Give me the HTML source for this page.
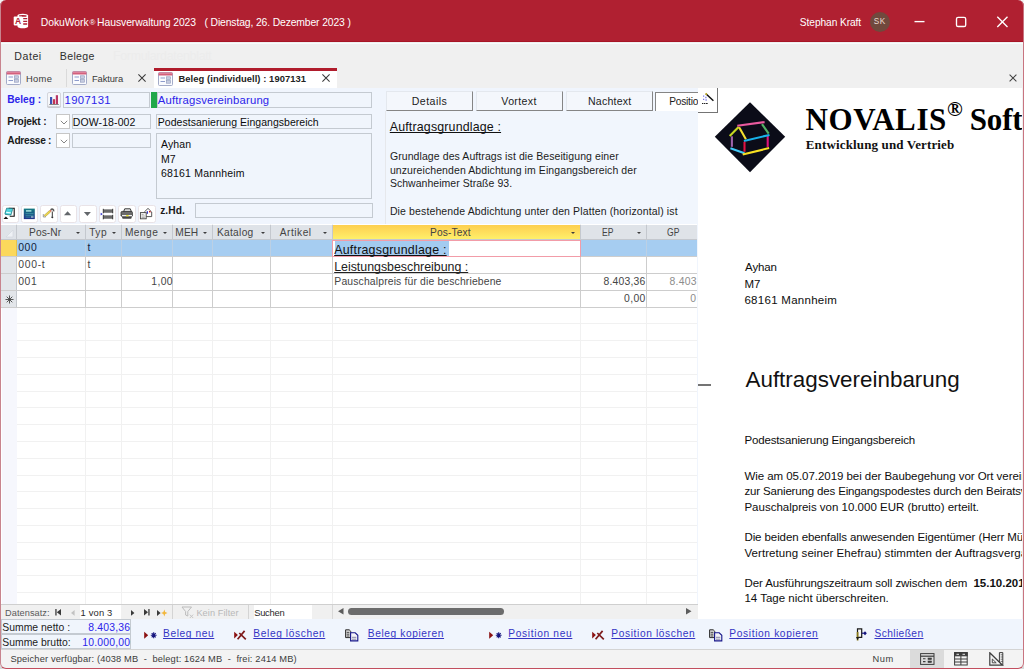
<!DOCTYPE html>
<html lang="de">
<head>
<meta charset="utf-8">
<title>DokuWork Hausverwaltung 2023</title>
<style>
*{box-sizing:border-box;margin:0;padding:0}
html,body{width:1024px;height:669px;overflow:hidden;background:#f2f5f5}
.cn{position:absolute;top:659px;width:10px;height:10px;background:#d6dada}
body{font-family:"Liberation Sans",sans-serif;font-size:11px;color:#222;position:relative}
.abs,.t,.bx{position:absolute}
.t{white-space:pre;line-height:1;color:#1c1c1c;text-decoration-skip-ink:none}
#win{position:absolute;left:0;top:0;width:1024px;height:669px;border-radius:6px;overflow:hidden;background:#f0f0f0}
#frame{position:absolute;left:0;top:0;width:1024px;height:669px;border-radius:6px;border:1.200px solid #c87480;border-left:1px solid #c8848e;border-top:none;border-bottom-color:#c24e5e;z-index:50}
#title{position:absolute;left:0;top:0;width:1024px;height:42.300px;background:#b02031;border-bottom:1.300px solid #a71526}
#title .t{color:#fff}
#avatar{position:absolute;left:869.500px;top:11.500px;width:20px;height:20px;border-radius:50%;background:#70493d}
#menu{position:absolute;left:0;top:42.800px;width:1024px;height:26px;background:#f0f0f0;border-top:1.500px solid #f7fcfc}
#tabs{position:absolute;left:0;top:68px;width:1024px;height:20px;background:#f0f0f0}
#acttab{position:absolute;left:153.500px;top:68px;width:183.500px;height:20px;background:#fff;border-top:3px solid #b01c2c}
#formbg{position:absolute;left:1px;top:88px;width:697.400px;height:137px;background:#f0f5fd}
.tb{position:absolute;border:1px solid #c4cad1;background:#f0f5fc}
.cbtn{position:absolute;border:1px solid #c6c6c6;background:#fff}
.ibtn{position:absolute;border:1px solid #d4d6dc;border-radius:2px;background:#f6f7fa;box-shadow:0 1px 0 #c8c8cc}
.tbtn{position:absolute;top:205.200px;width:17.600px;height:18.300px;border:1px solid #e9e3e7;border-radius:2.500px;background:#fff}
.itab{position:absolute;top:91.500px;height:19px;background:#f4f7fc;border-right:1.500px solid #858585;border-bottom:1.500px solid #858585;border-top:1px solid #e4e8ee;border-left:1px solid #e4e8ee}
.itab.sel{background:#fff;border:none;border-left:1.500px solid #858585;border-top:1.500px solid #858585;height:20px}
#ipage{position:absolute;left:385px;top:111px;width:313.400px;height:114px;background:#f1f6fd;overflow:hidden;border-left:1px solid #e6e8ec}
#grid{position:absolute;left:1px;top:224px;width:695.500px;height:381px;background:#fff;overflow:hidden}
.vl,.hl{position:absolute;background:#f1f1f1}
.vl{top:0;width:1px;height:381px}
.hl{left:0;height:1px;width:696px}
#ghead{position:absolute;left:0;top:.8px;width:696px;height:15px;background:#dfe3e8;border-bottom:1px solid #c4c8ce}
.hs{position:absolute;top:0;width:1px;height:15px;background:#c4c8ce}
.ar{position:absolute;top:7.400px;width:0;height:0;border:2.200px solid transparent;border-top:2.600px solid #3c3c3c;border-bottom:none}
.row{position:absolute;left:0;width:696px;background:#fff;border-bottom:1px solid #cdcdcd}
.cs{position:absolute;top:0;width:1px;height:100%;background:#cdcdcd}
.rs{position:absolute;left:0;top:0;width:15.500px;height:100%;background:#e3e6ea;border-right:1px solid #c4c8ce}
#grid .t{color:#454545}
#prev{position:absolute;left:698.400px;top:88px;width:324px;height:532px;background:#fff;overflow:hidden}
#prev .t{color:#0e0e0e}
#nav{position:absolute;left:1px;top:604px;width:697px;height:15px;background:#f0f0f0;border-top:1px solid #cfcfcf}
#sum{position:absolute;left:1px;top:619px;width:1022px;height:30px;background:#f0f5fd}
.lk{color:#3434c4 !important;text-decoration:underline;text-decoration-thickness:1px;text-underline-offset:1px}
#status{position:absolute;left:0;top:648.500px;width:1024px;height:21px;background:#f3f3f3;border-top:1px solid #d4d4d4}
</style>
</head>
<body>
<div class="cn" style="left:0"></div><div class="cn" style="left:1014px"></div>
<div id="win">
<!-- TITLE BAR -->
<div id="title">
<svg class="abs" style="left:13px;top:13px" width="16" height="16" viewBox="0 0 16 16">
<path d="M4.500 2.600C4.500 1.500 7 .8 9.800 .8s5.300.7 5.300 1.800v10.800c0 1.100-2.500 1.800-5.300 1.800s-5.300-.7-5.300-1.800z" fill="#fff"/>
<ellipse cx="9.800" cy="2.900" rx="3.900" ry=".9" fill="#b02031"/>
<path d="M10.200 5.600h4M10.200 8.300h4M10.200 11h4" stroke="#b02031" stroke-width="1.300"/>
<rect x=".7" y="3.600" width="8.600" height="8.800" rx=".8" fill="#fff"/>
<text x="5" y="11" font-family="Liberation Sans,sans-serif" font-weight="bold" font-size="8.500" fill="#b02031" text-anchor="middle">A</text>
</svg>
<span class="t" style="left:40.82px;top:17.80px;font-size:10.4px;letter-spacing:-0.065px">DokuWork</span>
<span class="t" style="left:89.40px;top:18.63px;font-size:8px;letter-spacing:0.000px">®</span>
<span class="t" style="left:97.12px;top:17.80px;font-size:10.4px;letter-spacing:-0.086px">Hausverwaltung 2023</span>
<span class="t" style="left:204.52px;top:17.80px;font-size:10.4px;letter-spacing:-0.146px">( Dienstag, 26. Dezember 2023 )</span>
<span class="t" style="left:799.84px;top:17.77px;font-size:10.2px;letter-spacing:-0.081px">Stephan Kraft</span>
<div id="avatar"></div>
<span class="t" style="left:873.77px;top:17.66px;font-size:8.2px;letter-spacing:0.644px;color:#ecd9d2">SK</span>
<svg class="abs" style="left:910px;top:12px" width="110" height="20" viewBox="0 0 110 20" fill="none" stroke="#fff" stroke-width="1.350">
<path d="M4.500 9.600h10"/><rect x="46.500" y="5.300" width="9.200" height="9.200" rx="1.600"/><path d="M87.300 4.800l10.200 10.200M97.500 4.800l-10.200 10.200"/></svg>
</div>
<!-- MENU -->
<div id="menu"></div>
<span class="t" style="left:14.31px;top:50.53px;font-size:10.6px;letter-spacing:0.537px;color:#2e2e2e">Datei</span>
<span class="t" style="left:59.81px;top:50.53px;font-size:10.6px;letter-spacing:0.328px;color:#2e2e2e">Belege</span>
<span class="t" style="left:112.99px;top:49.50px;font-size:12.4px;letter-spacing:-0.305px;color:#ececec">Formulardatenblatt</span>
<!-- DOCUMENT TABS -->
<div id="tabs"></div>
<div id="acttab"></div>
<div class="abs" style="left:66.200px;top:69px;width:1px;height:18px;background:#dadada"></div>
<svg class="abs" style="left:5.7px;top:71.2px" width="15" height="14" viewBox="0 0 15 14">
<rect x=".5" y=".5" width="14" height="13" rx="1" fill="#fafbfe" stroke="#a3abc8"/>
<path d="M.5 1.500a1 1 0 0 1 1-1h12a1 1 0 0 1 1 1V3.500H.5z" fill="#d4607c"/>
<path d="M1 1.200h13" stroke="#e9a0b2" stroke-width=".8"/>
<path d="M2.500 6h4.500M2.500 9.500h4.500" stroke="#8e9ccc" stroke-width="1.200"/>
<rect x="8.300" y="4.800" width="4.200" height="2.600" fill="#c6cce0" stroke="#8e98ba" stroke-width=".6"/>
<rect x="8.300" y="8.600" width="4.200" height="2.600" fill="#c6cce0" stroke="#8e98ba" stroke-width=".6"/>
</svg>
<svg class="abs" style="left:72px;top:71.2px" width="15" height="14" viewBox="0 0 15 14">
<rect x=".5" y=".5" width="14" height="13" rx="1" fill="#fafbfe" stroke="#a3abc8"/>
<path d="M.5 1.500a1 1 0 0 1 1-1h12a1 1 0 0 1 1 1V3.500H.5z" fill="#d4607c"/>
<path d="M1 1.200h13" stroke="#e9a0b2" stroke-width=".8"/>
<path d="M2.500 6h4.500M2.500 9.500h4.500" stroke="#8e9ccc" stroke-width="1.200"/>
<rect x="8.300" y="4.800" width="4.200" height="2.600" fill="#c6cce0" stroke="#8e98ba" stroke-width=".6"/>
<rect x="8.300" y="8.600" width="4.200" height="2.600" fill="#c6cce0" stroke="#8e98ba" stroke-width=".6"/>
</svg>
<svg class="abs" style="left:157.8px;top:71.6px" width="15" height="14" viewBox="0 0 15 14">
<rect x=".5" y=".5" width="14" height="13" rx="1" fill="#fafbfe" stroke="#a3abc8"/>
<path d="M.5 1.500a1 1 0 0 1 1-1h12a1 1 0 0 1 1 1V3.500H.5z" fill="#d4607c"/>
<path d="M1 1.200h13" stroke="#e9a0b2" stroke-width=".8"/>
<path d="M2.500 6h4.500M2.500 9.500h4.500" stroke="#8e9ccc" stroke-width="1.200"/>
<rect x="8.300" y="4.800" width="4.200" height="2.600" fill="#c6cce0" stroke="#8e98ba" stroke-width=".6"/>
<rect x="8.300" y="8.600" width="4.200" height="2.600" fill="#c6cce0" stroke="#8e98ba" stroke-width=".6"/>
</svg>
<span class="t" style="left:25.99px;top:74.44px;font-size:9.4px;letter-spacing:0.305px;color:#3a3a3a">Home</span>
<span class="t" style="left:91.89px;top:74.44px;font-size:9.4px;letter-spacing:-0.093px;color:#3a3a3a">Faktura</span>
<span class="t" style="left:178.49px;top:74.44px;font-size:9.4px;letter-spacing:0.070px;font-weight:bold;color:#222">Beleg (individuell) : 1907131</span>
<svg class="abs" style="left:137.2px;top:72.9px" width="10" height="10" viewBox="-5 -5 10 10"><path d="M-3.6 -3.6L3.6 3.6M3.6 -3.6L-3.6 3.6" stroke="#3a3a3a" stroke-width="1.05" fill="none"/></svg>
<svg class="abs" style="left:320.9px;top:72.9px" width="10" height="10" viewBox="-5 -5 10 10"><path d="M-3.6 -3.6L3.6 3.6M3.6 -3.6L-3.6 3.6" stroke="#3a3a3a" stroke-width="1.05" fill="none"/></svg>
<svg class="abs" style="left:1008px;top:73px" width="10" height="10" viewBox="-5 -5 10 10"><path d="M-3.4 -3.4L3.4 3.4M3.4 -3.4L-3.4 3.4" stroke="#444" stroke-width="1.05" fill="none"/></svg>
<!-- FORM HEADER -->
<div id="formbg"></div>
<div class="abs" style="left:696px;top:224px;width:2.400px;height:380px;background:#f0f5fd"></div>
<span class="t" style="left:7.14px;top:95.27px;font-size:10.2px;letter-spacing:0.027px;font-weight:bold;color:#2c24ea">Beleg :</span>
<div class="ibtn" style="left:47px;top:92px;width:14px;height:14.500px"><svg width="12" height="13" viewBox="0 0 12 13" style="position:absolute;left:0;top:0"><rect x="2" y="4" width="2.200" height="7" fill="#3c52b4"/><rect x="4.900" y="6.200" width="2.200" height="4.800" fill="#c43450"/><rect x="7.800" y="2.200" width="2.200" height="8.800" fill="#b83464"/><rect x="1.300" y="11" width="9.500" height=".9" fill="#777"/></svg></div>
<div class="tb" style="left:63.3px;top:91.5px;width:87.2px;height:16.200000000000003px;"></div>
<span class="t" style="left:64.57px;top:94.73px;font-size:11.3px;letter-spacing:0.332px;color:#2c24ea">1907131</span>
<div class="abs" style="left:150.5px;top:91.5px;width:6.300000000000011px;height:16.200000000000003px;background:#21a849"></div>
<div class="tb" style="left:156.8px;top:91.5px;width:215.7px;height:16.200000000000003px;"></div>
<span class="t" style="left:157.77px;top:94.73px;font-size:11.3px;letter-spacing:0.177px;color:#2c24ea">Auftragsvereinbarung</span>
<span class="t" style="left:7.14px;top:117.07px;font-size:10.2px;letter-spacing:-0.154px;font-weight:bold;color:#1a1a1a">Projekt :</span>
<div class="cbtn" style="left:55.8px;top:114px;width:14.5px;height:14.699999999999989px;"><svg width="8" height="5" viewBox="0 0 8 5" style="position:absolute;left:3px;top:4.500px"><path d="M.8.8L4 4l3.200-3.200" fill="none" stroke="#858585" stroke-width="1"/></svg></div>
<div class="tb" style="left:71.9px;top:114px;width:78.9px;height:14.699999999999989px;"></div>
<span class="t" style="left:72.72px;top:116.71px;font-size:10.5px;letter-spacing:0.111px;color:#0c0c0c">DOW-18-002</span>
<div class="tb" style="left:156.3px;top:114px;width:216.2px;height:14.699999999999989px;"></div>
<span class="t" style="left:157.82px;top:116.71px;font-size:10.5px;letter-spacing:0.031px;color:#0c0c0c">Podestsanierung Eingangsbereich</span>
<span class="t" style="left:7.34px;top:136.17px;font-size:10.2px;letter-spacing:-0.288px;font-weight:bold;color:#1a1a1a">Adresse :</span>
<div class="cbtn" style="left:55.8px;top:133.2px;width:14.5px;height:14.600000000000023px;"><svg width="8" height="5" viewBox="0 0 8 5" style="position:absolute;left:3px;top:4.500px"><path d="M.8.8L4 4l3.200-3.200" fill="none" stroke="#858585" stroke-width="1"/></svg></div>
<div class="tb" style="left:71.9px;top:133.2px;width:78.9px;height:14.600000000000023px;"></div>
<div class="tb" style="left:156.3px;top:133.2px;width:216.2px;height:65.80000000000001px;"></div>
<span class="t" style="left:161.02px;top:138.81px;font-size:10.5px;letter-spacing:0.121px;color:#0c0c0c">Ayhan</span>
<span class="t" style="left:161.02px;top:153.61px;font-size:10.5px;letter-spacing:0.000px;color:#0c0c0c">M7</span>
<span class="t" style="left:161.02px;top:168.01px;font-size:10.5px;letter-spacing:0.187px;color:#0c0c0c">68161 Mannheim</span>
<span class="t" style="left:160.14px;top:205.77px;font-size:10.2px;letter-spacing:0.073px;font-weight:bold;color:#1a1a1a">z.Hd.</span>
<div class="tb" style="left:195px;top:202.8px;width:177.5px;height:15.399999999999977px;"></div>
<!-- MINI TOOLBAR -->
<div class="tbtn" style="left:1.6px"></div>
<div class="tbtn" style="left:20.9px"></div>
<div class="tbtn" style="left:40.2px"></div>
<div class="tbtn" style="left:59.8px"></div>
<div class="tbtn" style="left:79.4px"></div>
<div class="tbtn" style="left:98.7px"></div>
<div class="tbtn" style="left:118.4px"></div>
<div class="tbtn" style="left:138.3px"></div>
<svg class="abs" style="left:0;top:205px" width="160" height="19" viewBox="0 205 160 19">
<!-- 1 preview -->
<path d="M8.600 208.300h5.600v8h-4.500" fill="#fff" stroke="#111" stroke-width="1.100"/>
<path d="M6.600 208.200l5.600 .3 .3 1.200-1.600 5.300-5.600-.6 -.3-1.200z" fill="#4fd3dc" stroke="#0e6e7a" stroke-width=".7"/>
<path d="M6.200 212.300l4.600.5" stroke="#e8ffff" stroke-width="1.200"/>
<path d="M3.500 219h4.800l-2.400-2.400z" fill="#111"/>
<!-- 2 calculator -->
<defs><linearGradient id="cg" x1="0" y1="0" x2="0" y2="1"><stop offset="0" stop-color="#147c82"/><stop offset="1" stop-color="#22308a"/></linearGradient></defs>
<rect x="23.800" y="208.600" width="11" height="10.500" fill="url(#cg)"/>
<rect x="26" y="210.200" width="5.400" height="1.400" fill="#b4ece4"/>
<path d="M25.500 213.500h8M25.500 215.300h8M25.500 217.100h5" stroke="#3ea0a6" stroke-width=".7"/><rect x="31" y="216.500" width="2.500" height="1" fill="#d8f0f0"/>
<!-- 3 pencil -->
<path d="M44 215.400l5.400-4.800 1.300 1.300-5.400 4.800z" fill="#f1d94a" stroke="#9a8a3a" stroke-width=".5"/>
<path d="M49.400 210.600l1.100-.9 1.300 1.300-1.100.9z" fill="#e0705e"/>
<path d="M43.300 214v3h2.400" fill="none" stroke="#777" stroke-width=".7"/>
<path d="M50.600 209.800c1.500-1.200 3.200-.6 3.100 1.600" fill="none" stroke="#5c5c5c" stroke-width="1.600"/>
<path d="M52.300 211.500v5" stroke="#333" stroke-width="1"/><circle cx="52.300" cy="217.300" r="1" fill="#333"/>
<!-- 4 up -->
<path d="M64 215.200h7.200l-3.600-3.900z" fill="#63676b"/>
<!-- 5 down -->
<path d="M83.900 212.100h7l-3.500 3.900z" fill="#63676b"/>
<!-- 6 insert rows -->
<rect x="103.300" y="209.300" width="9.400" height="3.500" fill="#7a7a7a"/><rect x="103.300" y="215.300" width="9.400" height="3.500" fill="#7a7a7a"/>
<path d="M103.300 208.800v4.500M112.700 208.800v4.500M103.300 214.800v4.500M112.700 214.800v4.500" stroke="#222" stroke-width=".9"/>
<path d="M103.300 210.400h9.400M103.300 211.700h9.400M103.300 216.400h9.400M103.300 217.700h9.400" stroke="#555" stroke-width=".5"/>
<path d="M100.700 212.800v2.600l1.900-1.300z" fill="#2222c8"/>
<!-- 7 printer -->
<path d="M123.500 212l1.200-3.200h5.600l1.200 3.200z" fill="#e8e8e8" stroke="#3c3c3c" stroke-width="1"/>
<path d="M121 212.400c0-.6.500-1 1-1h9.400c.6 0 1 .4 1 1v3.600h-11.400z" fill="#6c6c6c" stroke="#333" stroke-width=".8"/>
<path d="M121.600 216h10.600l-1 2.800h-8.600z" fill="#444"/>
<rect x="122" y="215" width="10" height="1.300" fill="#f0f0f0"/><rect x="126.200" y="215" width="2.400" height="1.300" fill="#e8e020"/>
<!-- 8 mail/doc -->
<path d="M144.300 212l3.700-3.600 3.700 3.600v4.600h-7.400z" fill="#fff" stroke="#444" stroke-width=".9"/>
<rect x="149" y="211" width="1.600" height="1.400" fill="#d02020"/><rect x="146.700" y="211.200" width="1.300" height="2.600" fill="#3a3ac8"/>
<rect x="140.400" y="212.600" width="5.800" height="6.200" fill="#f2f2f2" stroke="#444" stroke-width=".9"/>
<path d="M141.600 214.500h2M141.600 216h3.200M141.600 217.500h3.200" stroke="#888" stroke-width=".6"/>
</svg>
<!-- INNER TAB CONTROL -->
<div class="abs" style="left:385px;top:88px;width:313.400px;height:137px;overflow:hidden">
<div class="itab" style="left:0.6999999999999886px;top:3px;width:87.40000000000003px;height:19.5px;"></div>
<div class="itab" style="left:91.10000000000002px;top:3px;width:87.0px;height:19.5px;"></div>
<div class="itab" style="left:181.10000000000002px;top:3px;width:86.5px;height:19.5px;"></div>
<div class="itab sel" style="left:270.4px;top:3.5px;width:104.60000000000002px;height:20.0px;"></div>
<span class="t" style="left:26.71px;top:8.23px;font-size:10.6px;letter-spacing:0.449px">Details</span>
<span class="t" style="left:116.31px;top:8.23px;font-size:10.6px;letter-spacing:0.350px">Vortext</span>
<span class="t" style="left:202.91px;top:8.23px;font-size:10.6px;letter-spacing:0.225px">Nachtext</span>
<span class="t" style="left:284.24px;top:8.57px;font-size:10.2px;letter-spacing:-0.237px">Positionen</span>
</div>
<div id="ipage">
<span class="t" style="left:3.79px;top:10.00px;font-size:12.4px;letter-spacing:0.165px;color:#111;text-decoration:underline;text-underline-offset:1px">Auftragsgrundlage :</span>
<span class="t" style="left:3.92px;top:39.61px;font-size:10.5px;letter-spacing:0.086px">Grundlage des Auftrags ist die Beseitigung einer</span>
<span class="t" style="left:3.92px;top:53.51px;font-size:10.5px;letter-spacing:0.084px">unzureichenden Abdichtung im Eingangsbereich der</span>
<span class="t" style="left:3.92px;top:67.01px;font-size:10.5px;letter-spacing:0.035px">Schwanheimer Straße 93.</span>
<span class="t" style="left:3.92px;top:95.11px;font-size:10.5px;letter-spacing:0.127px">Die bestehende Abdichtung unter den Platten (horizontal) ist</span>
</div>
<!-- DATASHEET -->
<div id="grid">
<div class="vl" style="left:15.1px"></div>
<div class="vl" style="left:83.8px"></div>
<div class="vl" style="left:119.6px"></div>
<div class="vl" style="left:171.4px"></div>
<div class="vl" style="left:210.8px"></div>
<div class="vl" style="left:269.0px"></div>
<div class="vl" style="left:331.0px"></div>
<div class="vl" style="left:579.2px"></div>
<div class="vl" style="left:644.6px"></div>
<div class="hl" style="top:99.4px"></div>
<div class="hl" style="top:116.2px"></div>
<div class="hl" style="top:133.0px"></div>
<div class="hl" style="top:149.8px"></div>
<div class="hl" style="top:166.6px"></div>
<div class="hl" style="top:183.4px"></div>
<div class="hl" style="top:200.2px"></div>
<div class="hl" style="top:217.0px"></div>
<div class="hl" style="top:233.8px"></div>
<div class="hl" style="top:250.6px"></div>
<div class="hl" style="top:267.4px"></div>
<div class="hl" style="top:284.2px"></div>
<div class="hl" style="top:301.0px"></div>
<div class="hl" style="top:317.8px"></div>
<div class="hl" style="top:334.6px"></div>
<div class="hl" style="top:351.4px"></div>
<div class="hl" style="top:368.2px"></div>
<div class="abs" style="left:0;top:83px;width:15.600px;height:300px;background:#f6f7fd;border-left:1px solid #fff"></div>
<div id="ghead">
<div class="abs" style="left:331.5px;top:0;width:248.20000000000005px;height:14.400px;background:linear-gradient(#fdcf50,#fee05e 55%,#fef06a)"></div>
<div class="hs" style="left:15.1px"></div>
<div class="hs" style="left:83.8px"></div>
<div class="hs" style="left:119.6px"></div>
<div class="hs" style="left:171.4px"></div>
<div class="hs" style="left:210.8px"></div>
<div class="hs" style="left:269.0px"></div>
<div class="hs" style="left:331.0px"></div>
<div class="hs" style="left:579.2px"></div>
<div class="hs" style="left:644.6px"></div>
<svg class="abs" style="left:4px;top:4px" width="9" height="9" viewBox="0 0 9 9"><path d="M8 1v7H1z" fill="#eef1f5" stroke="#d0d5dc" stroke-width=".6"/></svg>
<i class="ar" style="left:74.5px"></i>
<i class="ar" style="left:111.1px"></i>
<i class="ar" style="left:162.4px"></i>
<i class="ar" style="left:201.8px"></i>
<i class="ar" style="left:259.5px"></i>
<i class="ar" style="left:321.8px"></i>
<i class="ar" style="left:569.8px"></i>
<i class="ar" style="left:635.5px"></i>
</div>
<span class="t" style="left:28.04px;top:3.87px;font-size:10.2px;letter-spacing:0.086px;color:#444">Pos-Nr</span>
<span class="t" style="left:88.14px;top:3.87px;font-size:10.2px;letter-spacing:0.553px;color:#444">Typ</span>
<span class="t" style="left:123.94px;top:3.87px;font-size:10.2px;letter-spacing:0.444px;color:#444">Menge</span>
<span class="t" style="left:174.34px;top:3.87px;font-size:10.2px;letter-spacing:0.094px;color:#444">MEH</span>
<span class="t" style="left:215.94px;top:3.87px;font-size:10.2px;letter-spacing:0.296px;color:#444">Katalog</span>
<span class="t" style="left:278.84px;top:3.87px;font-size:10.2px;letter-spacing:0.487px;color:#444">Artikel</span>
<span class="t" style="left:428.94px;top:3.87px;font-size:10.2px;letter-spacing:0.157px;color:#444">Pos-Text</span>
<span class="t" style="left:601.14px;top:3.87px;font-size:10.2px;letter-spacing:0.000px;color:#444;transform:scaleX(.84);transform-origin:0 0">EP</span>
<span class="t" style="left:665.74px;top:3.87px;font-size:10.2px;letter-spacing:0.000px;color:#444;transform:scaleX(.84);transform-origin:0 0">GP</span>
<div class="row" style="top:16.4px;height:16.8px;background:#a6cdf1">
<div class="rs" style="background:#fbd85c;border-right-color:#e6c24a"></div>
<div class="cs" style="left:83.8px;background:#bcd0e4"></div>
<div class="cs" style="left:119.6px;background:#bcd0e4"></div>
<div class="cs" style="left:171.4px;background:#bcd0e4"></div>
<div class="cs" style="left:210.8px;background:#bcd0e4"></div>
<div class="cs" style="left:269.0px;background:#bcd0e4"></div>
<div class="cs" style="left:331.0px;background:#bcd0e4"></div>
<div class="cs" style="left:579.2px;background:#bcd0e4"></div>
<div class="cs" style="left:644.6px;background:#bcd0e4"></div>
</div>
<div class="row" style="top:33.2px;height:16.8px;background:#fff">
<div class="rs"></div>
<div class="cs" style="left:83.8px;background:#cdcdcd"></div>
<div class="cs" style="left:119.6px;background:#cdcdcd"></div>
<div class="cs" style="left:171.4px;background:#cdcdcd"></div>
<div class="cs" style="left:210.8px;background:#cdcdcd"></div>
<div class="cs" style="left:269.0px;background:#cdcdcd"></div>
<div class="cs" style="left:331.0px;background:#cdcdcd"></div>
<div class="cs" style="left:579.2px;background:#cdcdcd"></div>
<div class="cs" style="left:644.6px;background:#cdcdcd"></div>
</div>
<div class="row" style="top:50.0px;height:16.8px;background:#fff">
<div class="rs"></div>
<div class="cs" style="left:83.8px;background:#cdcdcd"></div>
<div class="cs" style="left:119.6px;background:#cdcdcd"></div>
<div class="cs" style="left:171.4px;background:#cdcdcd"></div>
<div class="cs" style="left:210.8px;background:#cdcdcd"></div>
<div class="cs" style="left:269.0px;background:#cdcdcd"></div>
<div class="cs" style="left:331.0px;background:#cdcdcd"></div>
<div class="cs" style="left:579.2px;background:#cdcdcd"></div>
<div class="cs" style="left:644.6px;background:#cdcdcd"></div>
</div>
<div class="row" style="top:66.8px;height:16.8px;background:#fff">
<div class="rs"></div>
<div class="cs" style="left:83.8px;background:#cdcdcd"></div>
<div class="cs" style="left:119.6px;background:#cdcdcd"></div>
<div class="cs" style="left:171.4px;background:#cdcdcd"></div>
<div class="cs" style="left:210.8px;background:#cdcdcd"></div>
<div class="cs" style="left:269.0px;background:#cdcdcd"></div>
<div class="cs" style="left:331.0px;background:#cdcdcd"></div>
<div class="cs" style="left:579.2px;background:#cdcdcd"></div>
<div class="cs" style="left:644.6px;background:#cdcdcd"></div>
</div>
<div class="abs" style="left:331px;top:15.6px;width:249.29999999999995px;height:17.600px;background:#fff;border:1px solid #f29ca8"></div>
<div class="abs" style="left:334px;top:17px;width:114px;height:14.500px;background:#a3cbf0"></div>
<svg class="abs" style="left:3.500px;top:70.500px" width="9" height="9" viewBox="-4.500 -4.500 9 9"><path d="M0-4V4M-4 0H4M-2.800-2.800L2.800 2.800M2.800-2.800L-2.800 2.800" stroke="#444" stroke-width=".9"/></svg>
<span class="t" style="left:17.32px;top:19.40px;font-size:10.4px;letter-spacing:0.508px;color:#12203a">000</span>
<span class="t" style="left:86.50px;top:19.40px;font-size:10.4px;letter-spacing:0.000px;color:#12203a">t</span>
<span class="t" style="left:333.19px;top:20.00px;font-size:12.4px;letter-spacing:0.226px;color:#111;text-decoration:underline;text-underline-offset:1px">Auftragsgrundlage :</span>
<span class="t" style="left:17.32px;top:36.30px;font-size:10.4px;letter-spacing:0.667px">000-t</span>
<span class="t" style="left:86.50px;top:36.30px;font-size:10.4px;letter-spacing:0.000px">t</span>
<span class="t" style="left:333.19px;top:36.70px;font-size:12.4px;letter-spacing:-0.014px;color:#222;text-decoration:underline;text-underline-offset:1px">Leistungsbeschreibung :</span>
<span class="t" style="left:17.32px;top:53.20px;font-size:10.4px;letter-spacing:0.508px">001</span>
<span class="t" style="left:150.32px;top:53.20px;font-size:10.4px;letter-spacing:0.343px">1,00</span>
<span class="t" style="left:333.32px;top:53.20px;font-size:10.4px;letter-spacing:0.144px">Pauschalpreis für die beschriebene</span>
<span class="t" style="left:602.62px;top:53.20px;font-size:10.4px;letter-spacing:0.172px">8.403,36</span>
<span class="t" style="left:668.62px;top:53.20px;font-size:10.4px;letter-spacing:0.201px;color:#8c8c8c">8.403,36</span>
<span class="t" style="left:623.12px;top:70.00px;font-size:10.4px;letter-spacing:0.310px">0,00</span>
<span class="t" style="left:689.32px;top:70.00px;font-size:10.4px;letter-spacing:0.376px;color:#8c8c8c">0,00</span>
</div>
<!-- PREVIEW PANE -->
<div id="prev">
<div class="abs" style="left:0;top:0;width:19.800px;height:24.800px;background:#fff;border-right:1.500px solid #747474;border-bottom:1.500px solid #747474"></div>
<svg class="abs" style="left:2px;top:3px" width="16" height="16" viewBox="700 91 16 16">
<path d="M705.900 93.700l7.500 7" stroke="#111" stroke-width="1.500"/><path d="M705.600 93.400l1.300 1.200" stroke="#c8b020" stroke-width="1.500"/>
<path d="M703.200 96.200h1M705.400 97.500h1M703.200 99.300h1M705.600 100h1" stroke="#5858e0" stroke-width="1.300"/>
<path d="M702 103.500h1.400M704 103.500h1.400M706 103.500h1.700" stroke="#222" stroke-width="1"/></svg>
<svg class="abs" style="left:14.600px;top:12px" width="74" height="74" viewBox="713 100 74 74">
<path d="M714.800 136.700L750 102.200 785.200 136.700 750 172.200z" fill="#0b0c18"/>
<g stroke-width="2.100" fill="none">
<path d="M731.900 136.300V146.800" stroke="#a062aa"/>
<path d="M738.600 127.100L729.700 136" stroke="#c6d822"/>
<path d="M739.100 127.300L745.900 139.200" stroke="#f5e030"/>
<path d="M762 124.100L768.700 133.700" stroke="#52b266"/>
<path d="M737.300 125.700L764.600 122.100" stroke="#ea5a9e"/>
<path d="M767.700 135.600V146.900" stroke="#e2127c"/>
<path d="M743.900 141L769.500 134.900" stroke="#18b2ea"/>
<path d="M744.500 141.800V151.800" stroke="#e21242"/>
<path d="M730.400 148.200L744.500 153.200" stroke="#42c8f8"/>
<path d="M742.700 154.400L769.100 148.100" stroke="#f8e022"/>
</g></svg>
<span class="t" style="left:107.10px;top:15.74px;font-size:31px;letter-spacing:0.590px;font-weight:bold;font-family:'Liberation Serif',serif;color:#000">NOVALIS</span>
<span class="t" style="left:248.60px;top:10.61px;font-size:21px;letter-spacing:0.000px;font-weight:bold;font-family:'Liberation Serif',serif;color:#000">®</span>
<span class="t" style="left:271.40px;top:15.74px;font-size:31px;letter-spacing:-0.196px;font-weight:bold;font-family:'Liberation Serif',serif;color:#000">Software</span>
<span class="t" style="left:107.40px;top:49.81px;font-size:13px;letter-spacing:0.142px;font-weight:bold;font-family:'Liberation Serif',serif;color:#111">Entwicklung und Vertrieb</span>
<span class="t" style="left:46.70px;top:174.27px;font-size:11.5px;letter-spacing:-0.150px">Ayhan</span>
<span class="t" style="left:46.05px;top:190.57px;font-size:11.5px;letter-spacing:0.000px">M7</span>
<span class="t" style="left:46.05px;top:206.87px;font-size:11.5px;letter-spacing:0.279px">68161 Mannheim</span>
<div class="abs" style="left:0;top:296.300px;width:12.500px;height:1.600px;background:#747474"></div>
<span class="t" style="left:47.10px;top:280.74px;font-size:22.4px;letter-spacing:0.006px;color:#111">Auftragsvereinbarung</span>
<span class="t" style="left:46.05px;top:346.77px;font-size:11.5px;letter-spacing:-0.149px">Podestsanierung Eingangsbereich</span>
<span class="t" style="left:46.05px;top:382.97px;font-size:11.5px;letter-spacing:-0.049px">Wie am 05.07.2019 bei der Baubegehung vor Ort vereinbart, wird der Auftrag</span>
<span class="t" style="left:46.05px;top:398.27px;font-size:11.5px;letter-spacing:-0.156px">zur Sanierung des Eingangspodestes durch den Beiratsvorsitzenden zum</span>
<span class="t" style="left:46.05px;top:413.57px;font-size:11.5px;letter-spacing:0.000px">Pauschalpreis von 10.000 EUR (brutto) erteilt.</span>
<span class="t" style="left:46.05px;top:443.97px;font-size:11.5px;letter-spacing:-0.089px">Die beiden ebenfalls anwesenden Eigentümer (Herr Müller, auch in</span>
<span class="t" style="left:46.05px;top:459.57px;font-size:11.5px;letter-spacing:0.078px">Vertretung seiner Ehefrau) stimmten der Auftragsvergabe zu.</span>
<span class="t" style="left:46.05px;top:489.57px;font-size:11.5px;letter-spacing:-0.085px">Der Ausführungszeitraum soll zwischen dem</span>
<span class="t" style="left:275.05px;top:489.57px;font-size:11.5px;letter-spacing:0.004px;font-weight:bold;color:#111">15.10.2019 und 15.11.2019</span>
<span class="t" style="left:46.05px;top:505.27px;font-size:11.5px;letter-spacing:0.001px">14 Tage nicht überschreiten.</span>
</div>
<!-- RECORD NAVIGATION -->
<div id="nav"></div>
<span class="t" style="left:5.10px;top:608.81px;font-size:9.2px;letter-spacing:0.053px;color:#5a5a5a">Datensatz:</span>
<svg class="abs" style="left:55px;top:609.300px" width="7" height="7" viewBox="0 0 7 7"><path d="M.3 0h1.300v6.400H.3zM6 0v6.400L1.800 3.200z" fill="#3a3a3a"/></svg>
<svg class="abs" style="left:70.800px;top:609.600px" width="4" height="6" viewBox="0 0 4 6"><path d="M3.600 0v5.800L0 2.900z" fill="#c2c2c2"/></svg>
<div class="abs" style="left:79.7px;top:605px;width:41.5px;height:13.799999999999955px;background:#fff"></div>
<span class="t" style="left:80.59px;top:608.14px;font-size:9.4px;letter-spacing:0.162px;color:#2a2a2a">1 von 3</span>
<svg class="abs" style="left:131px;top:609.600px" width="4" height="6" viewBox="0 0 4 6"><path d="M0 0v5.800L3.400 2.900z" fill="#3a3a3a"/></svg>
<svg class="abs" style="left:144.200px;top:609.300px" width="7" height="7" viewBox="0 0 7 7"><path d="M4.300 0h1.300v6.400H4.300zM0 0v6.400L4 3.200z" fill="#3a3a3a"/></svg>
<svg class="abs" style="left:156.500px;top:608.500px" width="11" height="8" viewBox="0 0 11 8"><path d="M0 1v6L3.600 4z" fill="#3a3a3a"/><path d="M7.300 .6l.9 2.400 2.300 1-2.300 1-.9 2.400-.9-2.400L4.100 4l2.300-1z" fill="#f2b63a"/></svg>
<div class="abs" style="left:172.300px;top:605px;width:1px;height:14px;background:#d4d4d4"></div>
<svg class="abs" style="left:180.500px;top:605.500px" width="14" height="13" viewBox="0 0 14 13"><path d="M1 1h9.500L6.800 5.500V10L4.600 9V5.500z" fill="none" stroke="#bcbcbc" stroke-width="1"/><path d="M8.800 8.600l3.400 3.400M12.200 8.600l-3.400 3.400" stroke="#c4c4c4" stroke-width="1"/></svg>
<span class="t" style="left:196.40px;top:608.81px;font-size:9.2px;letter-spacing:0.084px;color:#b8b8b8">Kein Filter</span>
<div class="abs" style="left:248px;top:605px;width:1px;height:14px;background:#d4d4d4"></div>
<div class="abs" style="left:253.6px;top:605px;width:58.900000000000006px;height:13.799999999999955px;background:#fff"></div>
<span class="t" style="left:254.19px;top:608.14px;font-size:9.4px;letter-spacing:-0.275px;color:#2a2a2a">Suchen</span>
<div class="abs" style="left:332px;top:605px;width:1px;height:14px;background:#d8d8d8"></div>
<svg class="abs" style="left:338px;top:608px" width="6" height="7" viewBox="0 0 6 7"><path d="M5.500 0v6.600L0 3.300z" fill="#5c5c5c"/></svg>
<div class="abs" style="left:348px;top:607.500px;width:155.500px;height:7.500px;border-radius:4px;background:#6c6c6c"></div>
<svg class="abs" style="left:686.200px;top:608px" width="6" height="7" viewBox="0 0 6 7"><path d="M0 0v6.600L5.500 3.300z" fill="#5c5c5c"/></svg>
<!-- SUMMARY AND COMMANDS -->
<div id="sum"></div>
<div class="tb" style="left:0.5px;top:619px;width:130.0px;height:15px;"></div>
<div class="tb" style="left:0.5px;top:633.6px;width:130.0px;height:15.0px;"></div>
<span class="t" style="left:2.20px;top:623.20px;font-size:10.4px;letter-spacing:0.028px;color:#1c1c1c">Summe netto :</span>
<span class="t" style="left:2.20px;top:637.80px;font-size:10.4px;letter-spacing:0.030px;color:#1c1c1c">Summe brutto:</span>
<span class="t" style="left:88.22px;top:623.20px;font-size:10.4px;letter-spacing:0.187px;color:#2c24ea">8.403,36</span>
<span class="t" style="left:82.32px;top:637.80px;font-size:10.4px;letter-spacing:0.178px;color:#2c24ea">10.000,00</span>
<svg class="abs" style="left:144px;top:631px" width="14" height="9" viewBox="0 0 14 9"><path d="M.2 .7v7L4.200 4.200z" fill="#8b1212"/><path d="M9.700 1.300v5.900M6.800 4.250h5.800M7.700 2.200l4 4.100M11.700 2.200l-4 4.100" stroke="#14147e" stroke-width="1.100"/></svg>
<span class="t lk" style="left:163.04px;top:628.97px;font-size:10.2px;letter-spacing:0.593px">Beleg neu</span>
<svg class="abs" style="left:234px;top:629.500px" width="13" height="10" viewBox="0 0 13 10"><path d="M.2 1.700v6.800L3.900 5.100z" fill="#8b1212"/><path d="M3.600 9.300L10.600 .9M5.300 3l6.500 6.300" stroke="#7e1c1c" stroke-width="1.700" fill="none"/></svg>
<span class="t lk" style="left:253.34px;top:628.97px;font-size:10.2px;letter-spacing:0.610px">Beleg löschen</span>
<svg class="abs" style="left:345px;top:629px" width="14" height="13" viewBox="0 0 14 13"><path d="M.6 .8h3.600l1.600 1.600v6.200H.6z" fill="#d8d8d8" stroke="#2c2c2c" stroke-width="1"/><path d="M1.700 3.400h2.600M1.700 5.200h2.600M1.700 7h2.600" stroke="#2c2c2c" stroke-width=".8"/><path d="M5.600 3.800h4.600l2.600 2.500v5.600H5.600z" fill="#f4f4f8" stroke="#16168a" stroke-width="1.100"/><path d="M7 8.300h4.300M7 10.200h4.300" stroke="#8a8aa8" stroke-width="1"/></svg>
<span class="t lk" style="left:367.74px;top:628.97px;font-size:10.2px;letter-spacing:0.597px">Beleg kopieren</span>
<svg class="abs" style="left:489px;top:631px" width="14" height="9" viewBox="0 0 14 9"><path d="M.2 .7v7L4.200 4.200z" fill="#8b1212"/><path d="M9.700 1.300v5.900M6.800 4.250h5.800M7.700 2.200l4 4.100M11.700 2.200l-4 4.100" stroke="#14147e" stroke-width="1.100"/></svg>
<span class="t lk" style="left:508.34px;top:628.97px;font-size:10.2px;letter-spacing:0.660px">Position neu</span>
<svg class="abs" style="left:592px;top:629.500px" width="13" height="10" viewBox="0 0 13 10"><path d="M.2 1.700v6.800L3.900 5.100z" fill="#8b1212"/><path d="M3.600 9.300L10.600 .9M5.300 3l6.500 6.300" stroke="#7e1c1c" stroke-width="1.700" fill="none"/></svg>
<span class="t lk" style="left:611.34px;top:628.97px;font-size:10.2px;letter-spacing:0.609px">Position löschen</span>
<svg class="abs" style="left:709px;top:629px" width="14" height="13" viewBox="0 0 14 13"><path d="M.6 .8h3.600l1.600 1.600v6.200H.6z" fill="#d8d8d8" stroke="#2c2c2c" stroke-width="1"/><path d="M1.700 3.400h2.600M1.700 5.200h2.600M1.700 7h2.600" stroke="#2c2c2c" stroke-width=".8"/><path d="M5.600 3.800h4.600l2.600 2.500v5.600H5.600z" fill="#f4f4f8" stroke="#16168a" stroke-width="1.100"/><path d="M7 8.300h4.300M7 10.200h4.300" stroke="#8a8aa8" stroke-width="1"/></svg>
<span class="t lk" style="left:729.34px;top:628.97px;font-size:10.2px;letter-spacing:0.636px">Position kopieren</span>
<svg class="abs" style="left:855px;top:627.500px" width="13" height="13" viewBox="0 0 13 13"><path d="M2.500 .8h4.200v8.600H2.500z" fill="#f8f8f8" stroke="#1a1a1a" stroke-width="1.200"/><path d="M2.600 4v8.500" stroke="#8a7a18" stroke-width="1.700"/><path d="M1 9l1.600 3.200L4.200 9z" fill="#1a1a1a"/><path d="M8.200 5.200l1.800-2 1.800 2-1.800 2z" fill="#14147e"/><path d="M6.800 5.200h2" stroke="#14147e" stroke-width="1.200"/></svg>
<span class="t lk" style="left:874.44px;top:628.97px;font-size:10.2px;letter-spacing:0.416px">Schließen</span>
<!-- STATUS BAR -->
<div id="status"></div>
<span class="t" style="left:10.40px;top:655.13px;font-size:9.3px;letter-spacing:0.140px;color:#3c3c3c">Speicher verfügbar: (4038 MB  -  belegt: 1624 MB  -  frei: 2414 MB)</span>
<span class="t" style="left:872.40px;top:655.13px;font-size:9.3px;letter-spacing:0.590px;color:#3c3c3c">Num</span>
<div class="abs" style="left:910.200px;top:649.500px;width:33.600px;height:19px;background:#dbdbdb"></div>
<svg class="abs" style="left:920px;top:653px" width="15" height="12" viewBox="0 0 15 12" fill="none" stroke="#3c3c3c" stroke-width="1"><rect x=".6" y=".6" width="13.400" height="10.800"/><path d="M.6 3.200h13.400" stroke-width="1.200"/><path d="M3 5.700h2.500M3 8.600h2.500" stroke-width="1.100"/><rect x="8" y="5" width="3.500" height="1.500" fill="#3c3c3c" stroke-width=".6"/><rect x="8" y="8" width="3.500" height="1.500" fill="#3c3c3c" stroke-width=".6"/></svg>
<svg class="abs" style="left:954px;top:652px" width="14" height="14" viewBox="0 0 14 14" fill="none" stroke="#3c3c3c" stroke-width="1"><rect x=".6" y=".6" width="12.600" height="12.400"/><rect x=".6" y=".6" width="12.600" height="3.200" fill="#3c3c3c"/><path d="M2.500 2.300h2.500M8.500 2.300h2.500" stroke="#e8e8e8" stroke-width="1"/><path d="M.6 7h12.600M.6 10h12.600M6.900 3.800v9.200"/></svg>
<svg class="abs" style="left:988.500px;top:652px" width="15" height="14" viewBox="0 0 15 14" fill="none" stroke="#3c3c3c" stroke-width="1"><path d="M.8 .8L13.500 13.200H.8z" stroke-width="1.200"/><path d="M3.300 7v3.800h3.900z" stroke-width=".9"/><path d="M10.400 .6h3.400v12.600" /><path d="M10.400 .6v9.300"/><path d="M11.600 2.800h2.200M11.600 5h2.200M11.600 7.200h2.200M11.600 9.400h2.200" stroke-width=".7"/></svg>
</div>
<div id="frame"></div>
</body>
</html>
